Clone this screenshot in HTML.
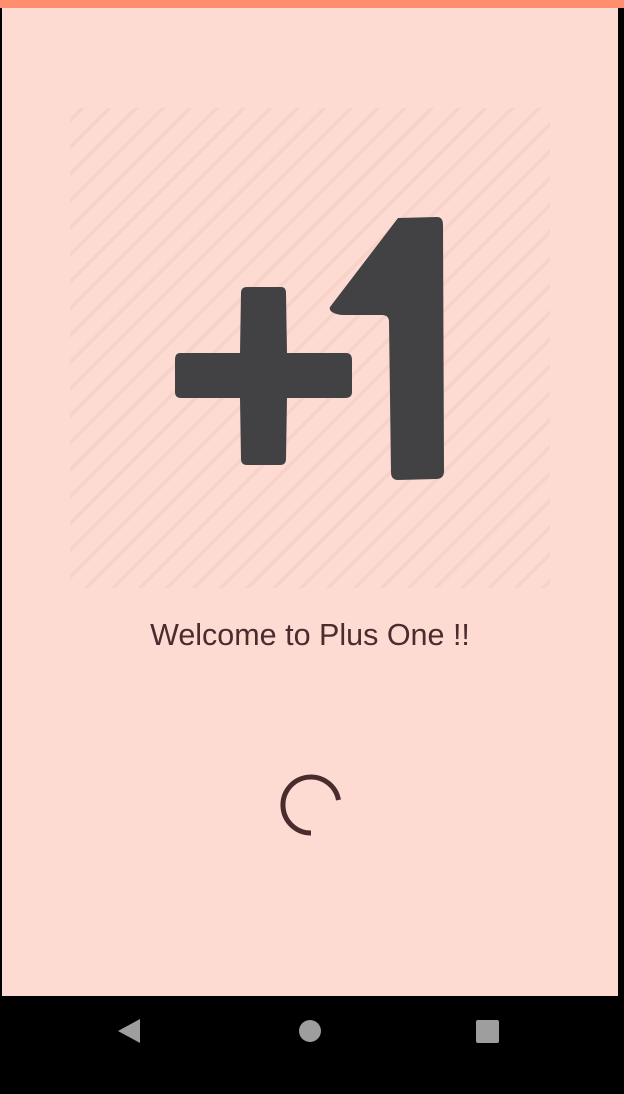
<!DOCTYPE html>
<html><head><style>
html,body{margin:0;padding:0}
body{width:624px;height:1094px;position:relative;background:#000;overflow:hidden;font-family:"Liberation Sans",sans-serif}
#app{position:absolute;left:2px;top:0;width:616px;height:996px;background:#fddbd2}
#bar{position:absolute;left:0;top:0;width:624px;height:8px;background:#ff8e6e}
#txt{position:absolute;left:0;width:620px;top:618px;text-align:center;font-size:30.5px;color:#4a2c2e}
</style></head><body>
<div id="app"></div>
<div id="bar"></div>
<svg width="624" height="1094" style="position:absolute;left:0;top:0">
<defs>
<pattern id="st" width="19" height="19" patternUnits="userSpaceOnUse" patternTransform="rotate(45)">
<rect x="0" y="0" width="3.5" height="19" fill="#f3cfc5"/>
</pattern>
</defs>
<rect x="70" y="108" width="480" height="480" fill="url(#st)" opacity="0.75"/>
<path d="M180 353 L240 353 L241 293 Q241 287 247 287 L281 287 Q286 287 286 293 L287 353 L346 353 Q352 353 352 360 L352 392 Q352 398 345 398 L287 398 L286 459 Q286 465 280 465 L247 465 Q241 465 241 459 L240 398 L181 398 Q175 398 175 392 L175 360 Q175 353 180 353 Z" fill="#424244"/>
<path d="M398 218 L437 217 Q443 217 443 225 L444 471 Q444 479 436 479 L398 480 Q391 480 391 472 L389 322 Q389 315 382 315 L342 315 Q328 313 330 307 Z" fill="#424244"/>
<path d="M338.5 800 A28 28 0 1 0 311 833" fill="none" stroke="#4a2c2e" stroke-width="5"/>
<path d="M118 1031 L140 1019 L140 1043 Z" fill="#9e9e9e"/>
<circle cx="310" cy="1031" r="11" fill="#9e9e9e"/>
<rect x="476" y="1020" width="23" height="23" rx="2" fill="#9e9e9e"/>
</svg>
<div id="txt">Welcome to Plus One !!</div>
</body></html>
